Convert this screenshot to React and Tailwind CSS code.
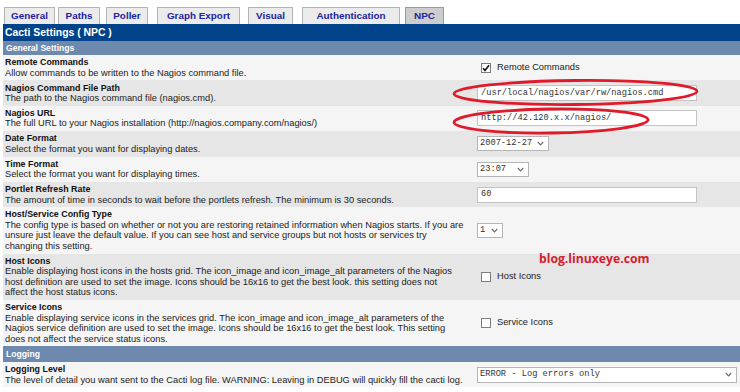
import React from "react";

const tabs = [
  { label: "General", w: "w-[51px]", ml: "ml-[4px]" },
  { label: "Paths", w: "w-[42px]", ml: "ml-[3px]" },
  { label: "Poller", w: "w-[42px]", ml: "ml-[6px]" },
  { label: "Graph Export", w: "w-[83px]", ml: "ml-[9px]" },
  { label: "Visual", w: "w-[45px]", ml: "ml-[8px]" },
  { label: "Authentication", w: "w-[98px]", ml: "ml-[9px]" },
  { label: "NPC", w: "w-[39px]", ml: "ml-[5px]", active: true },
];

function Chevron() {
  return (
    <svg width="7" height="5" viewBox="0 0 7 5" className="shrink-0">
      <polyline points="0.8,1 3.5,3.8 6.2,1" fill="none" stroke="#6b6b6b" strokeWidth="1.2" />
    </svg>
  );
}

function Check({ checked, label }) {
  return (
    <div className="flex items-center pl-[4px]">
      <span className="w-[10px] h-[10px] border border-[#7d7d7d] bg-white flex items-center justify-center">
        {checked && (
          <svg width="8" height="8" viewBox="0 0 8 8">
            <path d="M1 4.2 L3 6.4 L7 1.2" fill="none" stroke="#111" strokeWidth="1.6" />
          </svg>
        )}
      </span>
      <span className="ml-[6px] text-[9.3px] text-[#222]">{label}</span>
    </div>
  );
}

function TextIn({ value }) {
  return (
    <div className="w-[220px] h-[16px] border border-[#c3c3c3] bg-white flex items-center pl-[3px] font-['Liberation_Mono',monospace] text-[8.7px] text-[#333]">
      {value}
    </div>
  );
}

function Sel({ value, w, h = "h-[15px]" }) {
  return (
    <div className={`${w} ${h} border border-[#b5b5b5] bg-white flex items-center justify-between pl-[2px] pr-[4px] font-['Liberation_Mono',monospace] text-[8.7px] text-[#333]`}>
      <span>{value}</span>
      <Chevron />
    </div>
  );
}

const rows = [
  {
    title: "Remote Commands",
    lines: ["Allow commands to be written to the Nagios command file."],
    ctrl: <Check checked label="Remote Commands" />,
  },
  {
    title: "Nagios Command File Path",
    lines: ["The path to the Nagios command file (nagios.cmd)."],
    ctrl: <TextIn value="/usr/local/nagios/var/rw/nagios.cmd" />,
  },
  {
    title: "Nagios URL",
    lines: ["The full URL to your Nagios installation (http://nagios.company.com/nagios/)"],
    ctrl: <TextIn value="http://42.120.x.x/nagios/" />,
  },
  {
    title: "Date Format",
    lines: ["Select the format you want for displaying dates."],
    ctrl: <Sel value="2007-12-27" w="w-[72px]" />,
  },
  {
    title: "Time Format",
    lines: ["Select the format you want for displaying times."],
    ctrl: <Sel value="23:07" w="w-[52px]" />,
  },
  {
    title: "Portlet Refresh Rate",
    lines: ["The amount of time in seconds to wait before the portlets refresh. The minimum is 30 seconds."],
    ctrl: <TextIn value="60" />,
  },
  {
    title: "Host/Service Config Type",
    lines: [
      "The config type is based on whether or not you are restoring retained information when Nagios starts. If you are",
      "unsure just leave the default value. If you can see host and service groups but not hosts or services try",
      "changing this setting.",
    ],
    ctrl: <Sel value="1" w="w-[26px]" />,
  },
  {
    title: "Host Icons",
    lines: [
      "Enable displaying host icons in the hosts grid. The icon_image and icon_image_alt parameters of the Nagios",
      "host definition are used to set the image. Icons should be 16x16 to get the best look. this setting does not",
      "affect the host status icons.",
    ],
    ctrl: <Check label="Host Icons" />,
  },
  {
    title: "Service Icons",
    lines: [
      "Enable displaying service icons in the services grid. The icon_image and icon_image_alt parameters of the",
      "Nagios service definition are used to set the image. Icons should be 16x16 to get the best look. This setting",
      "does not affect the service status icons.",
    ],
    ctrl: <Check label="Service Icons" />,
  },
];

function Row({ r, dark }) {
  return (
    <div className={`flex ${dark ? "bg-[#e6e6e6]" : "bg-[#f5f5f5]"}`}>
      <div className="w-[471px] shrink-0 pl-[2px] py-[2.2px] leading-[10.5px] whitespace-nowrap overflow-hidden">
        <div className="font-bold text-[8.9px] text-[#111]">{r.title}</div>
        {r.lines.map((l, i) => (
          <div key={i} className="text-[9.3px] text-[#222]">{l}</div>
        ))}
      </div>
      <div className="flex-1 flex items-center pl-[3px]">{r.ctrl}</div>
    </div>
  );
}

export default function App() {
  return (
    <div className="relative w-[740px] h-[392px] overflow-hidden bg-white font-['Liberation_Sans',Arial,sans-serif]">
      <div className="flex items-end h-[24px]">
        {tabs.map((t) => (
          <div
            key={t.label}
            className={`${t.w} ${t.ml} h-[17px] shrink-0 flex items-center justify-center border border-b-0 font-bold text-[9.9px] text-[#22229e] ${
              t.active ? "bg-[#cdcdcd] border-[#9a9a9a]" : "bg-[#ebebeb] border-[#b4b4b4]"
            }`}
          >
            {t.label}
          </div>
        ))}
      </div>
      <div className="ml-[3px]">
        <div className="h-[17px] bg-[#00438a] flex items-center pl-[2px] text-white font-bold text-[10.4px]">
          Cacti Settings ( NPC )
        </div>
        <div className="h-[14px] bg-[#6d89ae] flex items-center pl-[3px] text-white font-bold text-[8.6px]">
          General Settings
        </div>
        {rows.map((r, i) => (
          <Row key={r.title} r={r} dark={i % 2 === 1} />
        ))}
        <div className="h-[15.5px] bg-[#6d89ae] flex items-center pl-[3px] text-white font-bold text-[8.6px]">
          Logging
        </div>
        <Row
          r={{
            title: "Logging Level",
            lines: ["The level of detail you want sent to the Cacti log file. WARNING: Leaving in DEBUG will quickly fill the cacti log."],
            ctrl: <Sel value="ERROR - Log errors only" w="w-[260px]" h="h-[16px]" />,
          }}
          dark={false}
        />
      </div>

      <svg className="absolute inset-0 pointer-events-none" width="740" height="392">
        <ellipse cx="575.5" cy="92.5" rx="121.5" ry="12" fill="none" stroke="#e01a2b" strokeWidth="2.8" transform="rotate(-0.6 575.5 92.5)" />
        <ellipse cx="551" cy="121" rx="97" ry="12" fill="none" stroke="#e01a2b" strokeWidth="2.8" transform="rotate(-0.8 551 121)" />
      </svg>
      <div className="absolute left-[539px] top-[250px] font-['Open_Sans',sans-serif] font-bold text-[12.2px] leading-[18px] text-[#d4202f]">
        blog.linuxeye.com
      </div>
    </div>
  );
}
